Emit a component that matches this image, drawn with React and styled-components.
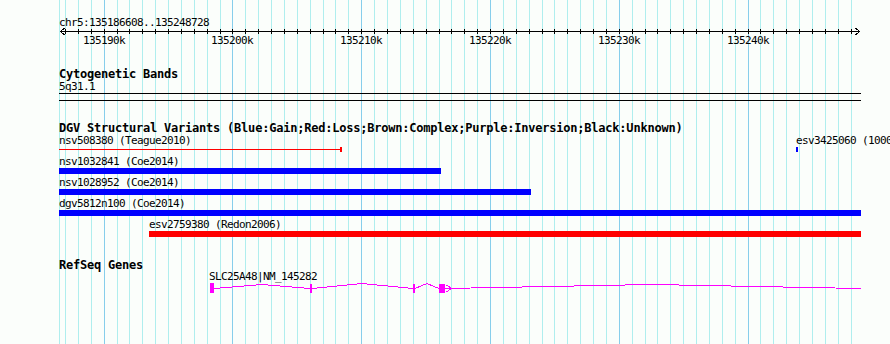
import React from 'react';
import styled, { createGlobalStyle } from 'styled-components';

const START = 135186608;
const END = 135248728;
const X0 = 60;
const SPAN = 800;
const toX = (bp) => Math.round(X0 + ((bp - START) * SPAN) / (END - START));

const kbPositions = [];
for (let bp = Math.ceil(START / 1000) * 1000; bp <= END; bp += 1000) kbPositions.push(bp);

const GlobalStyle = createGlobalStyle`
  html, body { margin: 0; padding: 0; background: #fbfefb; overflow: hidden; }
  #root { width: 890px; height: 344px; }
`;

const Panel = styled.div`
  position: relative;
  width: 890px;
  height: 344px;
  overflow: hidden;
  background: #fbfefb;
  color: #000;
  font-family: "DejaVu Sans Mono", "Liberation Mono", monospace;
`;

const GridLayer = styled.svg`
  position: absolute;
  left: 0;
  top: 0;
  z-index: 0;
  display: block;
`;

const Content = styled.div`
  position: relative;
  z-index: 1;
  display: flex;
  flex-direction: column;
`;

const Ruler = styled.section`
  display: flex;
  flex-direction: column;
  padding-top: 18px;
`;

const SmallText = styled.div`
  font-size: 11px;
  letter-spacing: -0.62px;
  white-space: nowrap;
`;

const ChromLabel = styled(SmallText)`
  line-height: 9px;
  height: 9px;
  padding-left: 59px;
`;

const Strip = styled.svg`
  display: block;
  flex: none;
`;

const TickRow = styled.div`
  position: relative;
  height: 11px;
`;

const TickLabel = styled(SmallText)`
  position: absolute;
  top: 0;
  line-height: 11px;
`;

const Track = styled.section`
  display: flex;
  flex-direction: column;
  margin-top: ${(p) => p.$gap}px;
`;

const TrackTitle = styled.h2`
  margin: 0;
  font-size: 12px;
  font-weight: bold;
  letter-spacing: -0.22px;
  line-height: 12px;
  height: 12px;
  padding-left: 59px;
  white-space: nowrap;
`;

const BandLabel = styled(SmallText)`
  line-height: 13px;
  height: 13px;
  padding-left: 59px;
`;

const FeatureRow = styled.div`
  position: relative;
  height: 21px;
`;

const Feature = styled.div`
  position: absolute;
  top: 0;
  display: flex;
  flex-direction: column;
`;

const FeatureLabel = styled(SmallText)`
  line-height: 13px;
  height: 13px;
`;

const Bar = styled.div`
  height: ${(p) => p.$h}px;
  background: ${(p) => p.$color};
`;

const SpanLine = styled.div`
  position: relative;
  height: 6px;
  &::before {
    content: '';
    position: absolute;
    left: 0;
    right: 0;
    top: 2px;
    height: 1px;
    background: ${(p) => p.$color};
  }
  &::after {
    content: '';
    position: absolute;
    right: 0;
    top: 0;
    width: 2px;
    height: 5px;
    background: ${(p) => p.$color};
  }
`;

const GeneLabel = styled(SmallText)`
  line-height: 11px;
  height: 11px;
  padding-left: 209px;
`;

const BLUE = '#0000ff';
const RED = '#ff0000';
const MAGENTA = '#ff00ff';

const dgvRows = [
  [
    { label: 'nsv508380 (Teague2010)', x1: 59, x2: 342, color: RED, kind: 'span' },
    { label: 'esv3425060 (1000Genomes)', x1: 796, x2: 798, color: BLUE, kind: 'bar', h: 5 },
  ],
  [{ label: 'nsv1032841 (Coe2014)', x1: 59, x2: 441, color: BLUE, kind: 'bar' }],
  [{ label: 'nsv1028952 (Coe2014)', x1: 59, x2: 531, color: BLUE, kind: 'bar' }],
  [{ label: 'dgv5812n100 (Coe2014)', x1: 59, x2: 861, color: BLUE, kind: 'bar' }],
  [{ label: 'esv2759380 (Redon2006)', x1: 149, x2: 861, color: RED, kind: 'bar' }],
];

const majorTicks = kbPositions.filter((bp) => bp % 10000 === 0);

function Grid() {
  return (
    <GridLayer width="890" height="344" shapeRendering="crispEdges">
      <rect x="59" y="0" width="1" height="344" fill="#afeeee" />
      {kbPositions.map((bp) => (
        <rect
          key={bp}
          x={toX(bp)}
          y="0"
          width="1"
          height="344"
          fill={bp % 10000 === 0 ? '#87ceeb' : '#afeeee'}
        />
      ))}
    </GridLayer>
  );
}

function Axis() {
  return (
    <Strip width="890" height="8" shapeRendering="crispEdges">
      <rect x="60" y="4" width="800" height="1" fill="#000" />
      {kbPositions.map((bp) => (
        <rect key={bp} x={toX(bp)} y="2" width="1" height="5" fill="#000" />
      ))}
      <polyline points="64.5,1 60.5,4.5 64.5,8" fill="none" stroke="#000" strokeWidth="1" />
      <polyline points="855.5,1 859.5,4.5 855.5,8" fill="none" stroke="#000" strokeWidth="1" />
    </Strip>
  );
}

function GeneModel() {
  const line = { fill: 'none', stroke: MAGENTA, strokeWidth: 1 };
  return (
    <Strip width="890" height="12" shapeRendering="crispEdges">
      <polyline points="214,6.5 262,2.5 310,6.5" {...line} />
      <polyline points="312,6.5 362,1.5 413,6.5" {...line} />
      <polyline points="415,6.5 427,1.5 439,6.5" {...line} />
      <polyline points="445,6.5 652,2.5 861,6.5" {...line} />
      <rect x="210" y="1" width="4" height="10" fill={MAGENTA} />
      <rect x="310" y="2" width="2" height="9" fill={MAGENTA} />
      <rect x="413" y="2" width="2" height="9" fill={MAGENTA} />
      <rect x="439" y="2" width="6" height="9" fill={MAGENTA} />
      <polyline points="446.5,3 451.5,6.5 446.5,10" {...line} />
    </Strip>
  );
}

export default function App() {
  return (
    <>
      <GlobalStyle />
      <Panel>
        <Grid />
        <Content>
          <Ruler>
            <ChromLabel>chr5:135186608..135248728</ChromLabel>
            <Axis />
            <TickRow>
              {majorTicks.map((bp) => (
                <TickLabel key={bp} style={{ left: toX(bp) - 21 }}>
                  {bp / 1000}k
                </TickLabel>
              ))}
            </TickRow>
          </Ruler>

          <Track $gap={22}>
            <TrackTitle>Cytogenetic Bands</TrackTitle>
            <BandLabel>5q31.1</BandLabel>
            <Strip width="890" height="8" shapeRendering="crispEdges">
              <rect x="59" y="0" width="802" height="1" fill="#000" />
              <rect x="59" y="7" width="802" height="1" fill="#000" />
            </Strip>
          </Track>

          <Track $gap={21}>
            <TrackTitle>
              DGV Structural Variants (Blue:Gain;Red:Loss;Brown:Complex;Purple:Inversion;Black:Unknown)
            </TrackTitle>
            {dgvRows.map((row, i) => (
              <FeatureRow key={i}>
                {row.map((f) => (
                  <Feature key={f.label} style={{ left: f.x1, width: f.x2 - f.x1 }}>
                    <FeatureLabel>{f.label}</FeatureLabel>
                    {f.kind === 'span' ? (
                      <SpanLine $color={f.color} />
                    ) : (
                      <Bar $color={f.color} $h={f.h || 6} />
                    )}
                  </Feature>
                ))}
              </FeatureRow>
            ))}
          </Track>

          <Track $gap={20}>
            <TrackTitle>RefSeq Genes</TrackTitle>
            <GeneLabel>SLC25A48|NM_145282</GeneLabel>
            <GeneModel />
          </Track>
        </Content>
      </Panel>
    </>
  );
}
